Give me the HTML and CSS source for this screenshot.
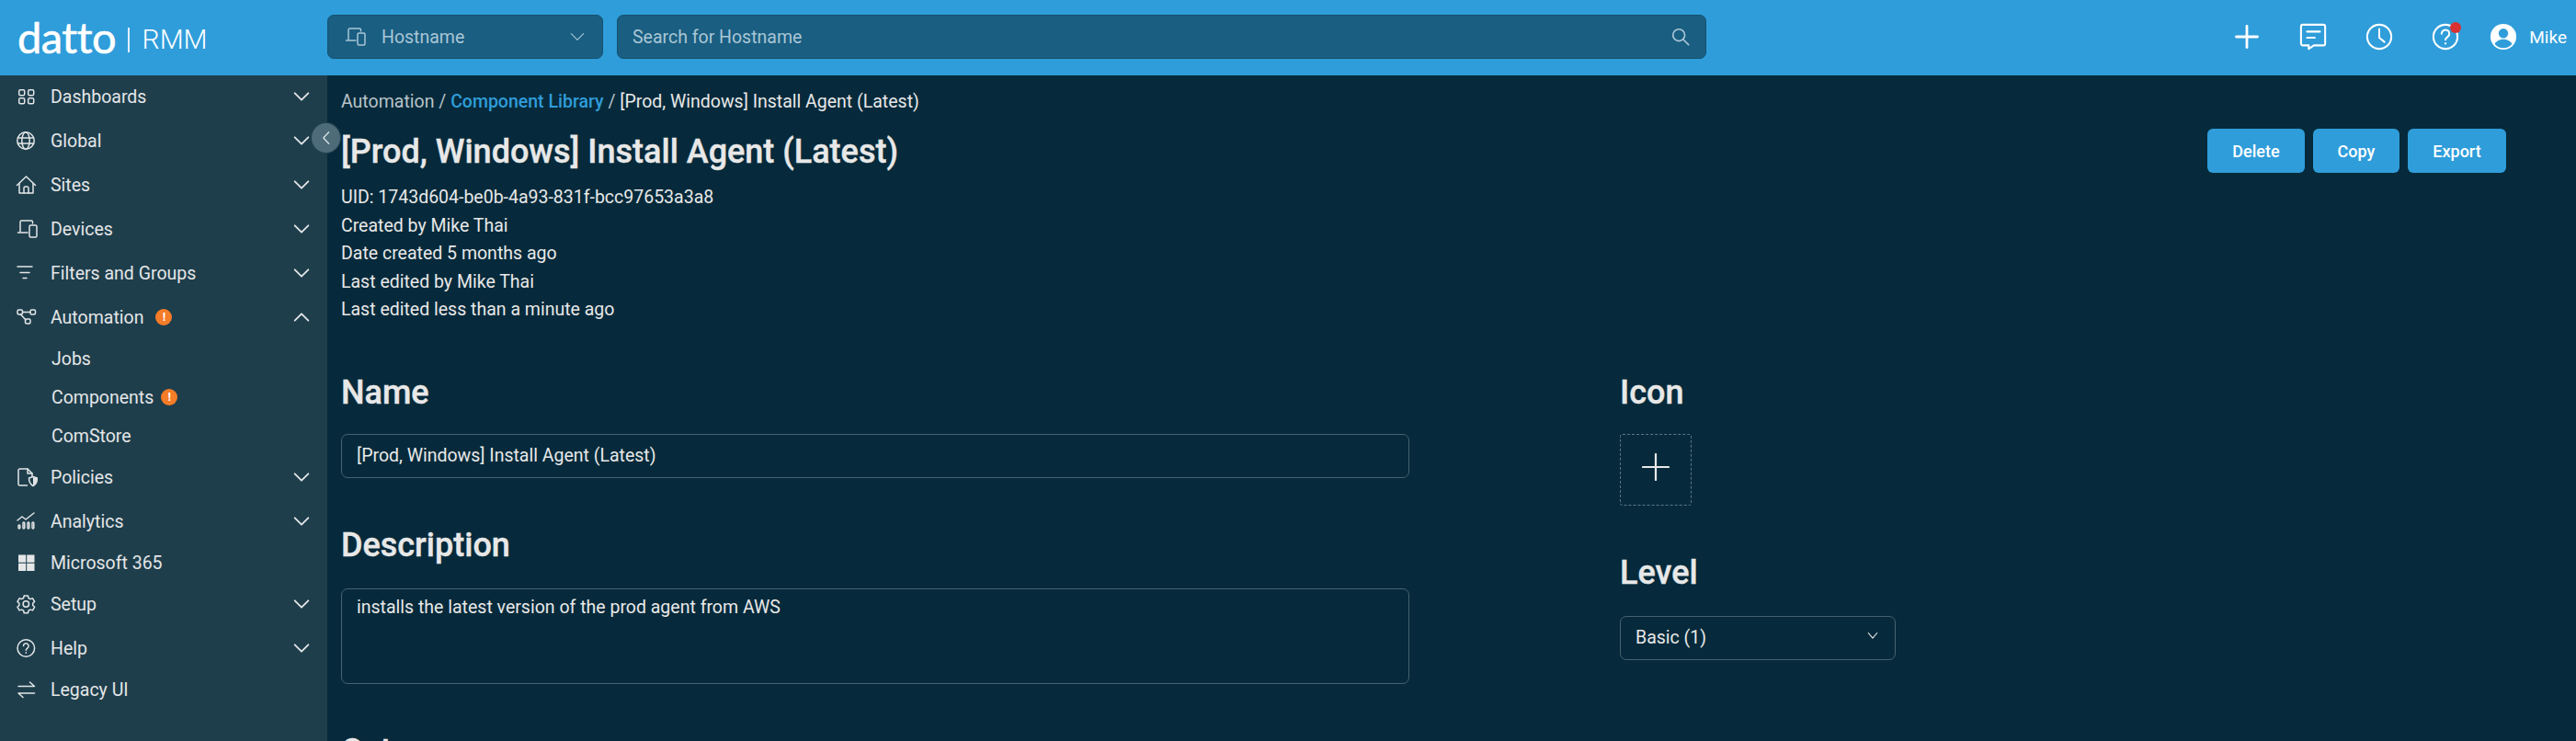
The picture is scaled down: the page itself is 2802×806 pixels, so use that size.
FILE: index.html
```html
<!DOCTYPE html>
<html lang="en">
<head>
<meta charset="utf-8">
<title>Datto RMM</title>
<link rel="stylesheet" href="styles.css">
</head>
<body>
<svg class="sprite" xmlns="http://www.w3.org/2000/svg">
  <symbol id="i-dash" viewBox="0 0 24 24"><rect x="3.7" y="4.7" width="6" height="6" rx="1.5"/><rect x="13.7" y="4.7" width="6" height="6" rx="1.5"/><rect x="3.7" y="13.7" width="6" height="6" rx="1.5"/><rect x="13.7" y="13.7" width="6" height="6" rx="1.5"/></symbol>
  <symbol id="i-globe" viewBox="0 0 24 24"><circle cx="11" cy="12" r="9.2"/><ellipse cx="11" cy="12" rx="4.2" ry="9.2"/><path d="M2.4 9h17.2M2.4 15h17.2"/></symbol>
  <symbol id="i-home" viewBox="0 0 24 24"><path d="M1.5 12.5 11.500 3l10 9.500"/><path d="M4 10.500V21h15V10.500"/><path d="M9 21v-5.500a1.500 1.500 0 0 1 1.500-1.500h2a1.500 1.500 0 0 1 1.500 1.500V21"/></symbol>
  <symbol id="i-devices" viewBox="0 0 24 24"><path d="M5 15V4.500A1.500 1.500 0 0 1 6.500 3H17a1.500 1.500 0 0 1 1.500 1.500V6"/><path d="M2.500 16H13"/><rect x="15" y="8" width="8" height="13" rx="1.500"/></symbol>
  <symbol id="i-filter" viewBox="0 0 24 24"><path d="M2 5h16M5 11.500h10M8 17.500h4"/></symbol>
  <symbol id="i-auto" viewBox="0 0 24 24"><rect x="2" y="4" width="5.500" height="5" rx="1.500"/><rect x="16" y="4" width="5.500" height="5" rx="1.500"/><rect x="10.500" y="14" width="5.500" height="5" rx="1.500"/><path d="M7.500 6.500H16M5.500 9l5.500 6"/></symbol>
  <symbol id="i-policy" viewBox="0 0 24 24"><path d="M12.500 21H4.500A1.500 1.500 0 0 1 3 19.500V4.500A1.500 1.500 0 0 1 4.500 3H13l5 5v3"/><path d="M13 3v5h5"/><path d="M19 11.500l4.500 1.500c0 4-1 6.500-4.500 8.500-3.500-2-4.500-4.500-4.500-8.500z"/><path class="fill" d="M19 12l4 1.300c0 3.700-1 6-4 7.700z"/></symbol>
  <symbol id="i-chart" viewBox="0 0 24 24"><path d="M2 11l5-4 4 3 9-7"/><rect x="3" y="16" width="1.800" height="4" rx=".9"/><rect x="8" y="13" width="1.800" height="7" rx=".9"/><rect x="13" y="13" width="1.800" height="7" rx=".9"/><rect x="18" y="13" width="1.800" height="7" rx=".9"/></symbol>
  <symbol id="i-win" viewBox="0 0 24 24"><path class="fill solid" d="M3 3.500h8.200v8.200H3zM12.200 3.500h8.300v8.200h-8.300zM3 12.700h8.200V21H3zM12.200 12.700h8.300V21h-8.300z"/></symbol>
  <symbol id="i-gear" viewBox="0 0 24 24"><circle cx="11.300" cy="12" r="3.200"/><path d="M9.200 3h4.200l.6 2.500 2 1.100 2.500-.8 2.100 3.600-1.900 1.800v2.300l1.900 1.800-2.100 3.600-2.500-.8-2 1.100-.6 2.500H9.200l-.6-2.500-2-1.100-2.500.8L2 15.300l1.900-1.800v-2.300L2 9.400l2.100-3.600 2.500.8 2-1.100z"/></symbol>
  <symbol id="i-help" viewBox="0 0 24 24"><circle cx="11.300" cy="12" r="9.300"/><path d="M8.500 9.500a2.800 2.800 0 1 1 4.500 2.300c-1 .7-1.700 1.200-1.700 2.400"/><path d="M11.300 16.800v.5"/></symbol>
  <symbol id="i-swap" viewBox="0 0 24 24"><path d="M3 8.500h17.500L15.500 4"/><path d="M20.500 16H3l5 4.500"/></symbol>
  <symbol id="i-down" viewBox="0 0 24 24"><path d="M4 8l8 8 8-8"/></symbol>
  <symbol id="i-up" viewBox="0 0 24 24"><path d="M4 16l8-8 8 8"/></symbol>
</svg>

<header class="topbar">
  <div class="logo"><span class="logo-word">datto</span><span class="logo-sep"></span><span class="logo-rmm">RMM</span></div>
  <div class="scope">
    <svg class="ico scope-ico"><use href="#i-devices"/></svg>
    <span class="scope-label">Hostname</span>
    <svg class="ico scope-chev"><use href="#i-down"/></svg>
  </div>
  <div class="search">
    <span class="search-text">Search for Hostname</span>
    <svg class="search-ico" viewBox="0 0 24 24"><circle cx="10" cy="10" r="7"/><path d="M15 15l7 7"/></svg>
  </div>
  <div class="actions">
    <svg class="act act-plus" viewBox="0 0 30 30"><path d="M15 3.500v23M3.500 15h23"/></svg>
    <svg class="act" viewBox="0 0 32 32"><path d="M4 2h24a2 2 0 0 1 2 2v20a2 2 0 0 1-2 2H17l-6 4v-4H4a2 2 0 0 1-2-2V4a2 2 0 0 1 2-2z"/><path d="M9 10h15M9 17h9"/></svg>
    <svg class="act" viewBox="0 0 32 32"><circle cx="16" cy="16" r="14"/><path d="M16 7v10l6 5"/></svg>
    <div class="help-wrap">
      <svg class="act" viewBox="0 0 32 32"><circle cx="16" cy="16" r="14"/><path d="M11.500 12.500a4.500 4.500 0 1 1 7 3.700c-1.500 1-2.500 1.800-2.500 3.300"/><path d="M16 23.500v.5"/></svg>
      <span class="dot"></span>
    </div>
    <div class="user">
      <svg class="avatar" viewBox="0 0 32 32"><circle class="av-bg" cx="16" cy="16" r="15"/><circle class="av-fg" cx="16" cy="12" r="5.500"/><path class="av-fg" d="M6 24.500c2-4 6-5.500 10-5.500s8 1.500 10 5.500c-2.500 3-6 4.500-10 4.500s-7.500-1.500-10-4.500z"/></svg>
      <span>Mike</span>
    </div>
  </div>
</header>

<div class="shell">
  <nav class="sidebar">
    <a class="row"><svg class="ico nav-ico"><use href="#i-dash"/></svg><span class="label">Dashboards</span><svg class="ico chev"><use href="#i-down"/></svg></a>
    <a class="row"><svg class="ico nav-ico"><use href="#i-globe"/></svg><span class="label">Global</span><svg class="ico chev"><use href="#i-down"/></svg></a>
    <a class="row"><svg class="ico nav-ico"><use href="#i-home"/></svg><span class="label">Sites</span><svg class="ico chev"><use href="#i-down"/></svg></a>
    <a class="row"><svg class="ico nav-ico"><use href="#i-devices"/></svg><span class="label">Devices</span><svg class="ico chev"><use href="#i-down"/></svg></a>
    <a class="row"><svg class="ico nav-ico"><use href="#i-filter"/></svg><span class="label">Filters and Groups</span><svg class="ico chev"><use href="#i-down"/></svg></a>
    <a class="row"><svg class="ico nav-ico"><use href="#i-auto"/></svg><span class="label">Automation</span><span class="badge badge-wide">!</span><svg class="ico chev"><use href="#i-up"/></svg></a>
    <a class="row row-short row-sub"><span class="label">Jobs</span></a>
    <a class="row row-short row-sub"><span class="label">Components</span><span class="badge">!</span></a>
    <a class="row row-short row-sub"><span class="label">ComStore</span></a>
    <a class="row"><svg class="ico nav-ico"><use href="#i-policy"/></svg><span class="label">Policies</span><svg class="ico chev"><use href="#i-down"/></svg></a>
    <a class="row"><svg class="ico nav-ico"><use href="#i-chart"/></svg><span class="label">Analytics</span><svg class="ico chev"><use href="#i-down"/></svg></a>
    <a class="row row-short"><svg class="ico nav-ico"><use href="#i-win"/></svg><span class="label">Microsoft 365</span></a>
    <a class="row"><svg class="ico nav-ico"><use href="#i-gear"/></svg><span class="label">Setup</span><svg class="ico chev"><use href="#i-down"/></svg></a>
    <a class="row"><svg class="ico nav-ico"><use href="#i-help"/></svg><span class="label">Help</span><svg class="ico chev"><use href="#i-down"/></svg></a>
    <a class="row row-short"><svg class="ico nav-ico"><use href="#i-swap"/></svg><span class="label">Legacy UI</span></a>
  </nav>
  <button class="collapse" type="button" aria-label="Collapse"><svg viewBox="0 0 12 20"><path d="M9.500 3 3 10l6.500 7"/></svg></button>

  <main class="content">
    <div class="crumbs"><span class="crumb-muted">Automation / </span><a class="crumb-link">Component Library</a><span class="crumb-muted"> / </span><span class="crumb-cur">[Prod, Windows] Install Agent (Latest)</span></div>
    <div class="head">
      <h1>[Prod, Windows] Install Agent (Latest)</h1>
      <div class="btns">
        <button class="btn btn-delete" type="button">Delete</button>
        <button class="btn btn-copy" type="button">Copy</button>
        <button class="btn btn-export" type="button">Export</button>
      </div>
    </div>
    <div class="meta">
      <div>UID: 1743d604-be0b-4a93-831f-bcc97653a3a8</div>
      <div>Created by Mike Thai</div>
      <div>Date created 5 months ago</div>
      <div>Last edited by Mike Thai</div>
      <div>Last edited less than a minute ago</div>
    </div>
    <div class="form">
      <div class="col">
        <h2>Name</h2>
        <div class="field field-input">[Prod, Windows] Install Agent (Latest)</div>
        <h2 class="later">Description</h2>
        <div class="field field-area">installs the latest version of the prod agent from AWS</div>
        <h2 class="later">Category</h2>
      </div>
      <div class="col">
        <h2>Icon</h2>
        <div class="icon-pick"><svg viewBox="0 0 30 30"><path d="M15 1v28M1 15h28"/></svg></div>
        <h2 class="later">Level</h2>
        <div class="field field-select"><span>Basic (1)</span><svg viewBox="0 0 14 10"><path d="M1.500 1.500 7 8l5.500-6.500"/></svg></div>
      </div>
    </div>
  </main>
</div>
</body>
</html>
```

FILE: styles.css
```css
* { box-sizing: border-box; }
html, body { margin: 0; height: 100%; }
body {
  overflow: hidden;
  background: #062a3b;
  color: #e8e8e8;
  font-family: Roboto, "Liberation Sans", sans-serif;
  font-size: 19.500px;
  display: flex;
  flex-direction: column;
}
.sprite { display: none; }

/* top bar */
.topbar {
  flex: none;
  height: 82px;
  background: #2f9dda;
  display: flex;
  align-items: center;
  padding-bottom: 2px;
}
.logo {
  width: 356px;
  padding-left: 19px;
  display: flex;
  align-items: center;
  color: #fff;
}
.logo-word { font-family: Lato, sans-serif; font-size: 47px; line-height: 50px; letter-spacing: -.5px; -webkit-text-stroke: .6px #fff; }
.logo-sep { width: 1.500px; height: 27px; margin: 6px 14px 0 13px; background: #fff; opacity: .85; }
.logo-rmm { font-family: Roboto, sans-serif; font-weight: 300; font-size: 30px; margin-top: 5px; }

.scope, .search {
  height: 48px;
  background: #1a5e81;
  border: 1px solid #155270;
  border-radius: 7px;
  color: #a9c6d6;
  display: flex;
  align-items: center;
}
.scope { width: 300px; padding: 0 17px; stroke: #a9c6d6; }
.scope-ico { width: 24px; height: 24px; stroke-width: 1.500; margin-right: 17px; }
.scope-label { flex: 1; }
.scope-chev { width: 20px; height: 20px; stroke-width: 1.300; }
.search { width: 1185px; margin-left: 15px; padding: 0 16px 0 16px; justify-content: space-between; }
.search-ico { width: 22px; height: 22px; fill: none; stroke: #a9c6d6; stroke-width: 1.800; }

.actions {
  flex: 1;
  display: flex;
  align-items: center;
  justify-content: flex-end;
  gap: 42px;
  padding-right: 10px;
  color: #fff;
}
.act { width: 30px; height: 30px; fill: none; stroke: #fff; stroke-width: 2.200; stroke-linecap: round; stroke-linejoin: round; display: block; }
.act-plus { stroke-width: 2.800; }
.help-wrap { position: relative; }
.dot { position: absolute; top: -1px; right: -2px; width: 12px; height: 12px; border-radius: 50%; background: #d93030; }
.user { display: flex; align-items: center; gap: 13px; margin-left: -9px; font-size: 19px; }
.avatar { width: 30px; height: 30px; display: block; }
.av-bg { fill: #fff; }
.av-fg { fill: #2f9dda; }

/* shell */
.shell { flex: 1; min-height: 0; display: flex; position: relative; }

/* sidebar */
.sidebar { flex: none; width: 356px; background: #1e3e4c; }
.ico, .row svg {
  fill: none;
  stroke-linecap: round;
  stroke-linejoin: round;
}
.row {
  height: 48px;
  display: flex;
  align-items: center;
  padding: 0 17px;
  color: #e4e6e7;
  stroke: #e4e6e7;
}
.row:first-child { margin-top: -1px; }
.row-short { height: 42px; }
.row-sub { padding-left: 56px; }
.nav-ico { width: 24px; height: 24px; margin-right: 14px; stroke-width: 1.500; flex: none; }
.fill { fill: #e4e6e7; stroke: none; }
.solid { fill: #e4e6e7; }
.chev { width: 22px; height: 22px; stroke-width: 2; margin-left: auto; }
.badge {
  width: 18px;
  height: 18px;
  margin-left: 8px;
  border-radius: 50%;
  background: #f57c28;
  color: #fff;
  font-size: 13px;
  font-weight: 700;
  line-height: 18px;
  text-align: center;
}
.badge-wide { margin-left: 13px; }

.collapse {
  position: absolute;
  left: 338px;
  top: 51px;
  width: 33px;
  height: 34px;
  padding: 0;
  border: 1px solid #23404d;
  border-radius: 50%;
  background: #4d6b78;
  display: flex;
  align-items: center;
  justify-content: center;
}
.collapse svg { width: 11px; height: 18px; fill: none; stroke: #d8dfe2; stroke-width: 1.500; stroke-linecap: round; stroke-linejoin: round; }

/* content */
.content { flex: 1; min-width: 0; padding: 17px 76px 0 15px; }
.crumbs { line-height: 24px; }
.crumb-muted { color: #b9c3c9; }
.crumb-link { color: #2f9dda; font-weight: 500; }
.crumb-cur { color: #e8e8e8; }
.head { display: flex; justify-content: space-between; align-items: flex-start; margin-top: 17px; }
h1, h2 { margin: 0; font-weight: 500; color: #e8e8e8; -webkit-text-stroke: .4px #e8e8e8; }
h1 { font-size: 36px; line-height: 44px; margin-top: 3px; }
h2 { font-size: 36px; line-height: 44px; }
.later { margin-top: 51px; }
.btns { display: flex; gap: 9px; }
.btn {
  height: 48px;
  border: 0;
  border-radius: 6px;
  background: #2f9dda;
  color: #fff;
  font: 500 18px Roboto, sans-serif;
  padding: 0;
}
.btn-delete { width: 106px; }
.btn-copy { width: 94px; }
.btn-export { width: 107px; }
.meta { margin-top: 12px; line-height: 30.500px; }
.form { display: grid; grid-template-columns: 1162px 300px; column-gap: 229px; margin-top: 52px; }
.col { min-width: 0; }
.field { border: 1px solid #46626f; border-radius: 7px; margin-top: 23px; padding: 0 16px; }
.field-input { height: 48px; line-height: 46px; }
.field-area { height: 104px; line-height: 26px; padding-top: 7px; margin-top: 25px; }
.icon-pick {
  width: 78px;
  height: 78px;
  margin-top: 23px;
  border: 1px dashed #5b7684;
  border-radius: 3px;
  display: flex;
  align-items: center;
  justify-content: center;
}
.icon-pick svg { width: 30px; height: 30px; fill: none; stroke: #e8e8e8; stroke-width: 2.200; stroke-linecap: round; margin-top: -5px; }
.field-select { height: 48px; display: flex; align-items: center; justify-content: space-between; margin-top: 25px; padding-right: 18px; }
.field-select svg { width: 12px; height: 9px; fill: none; stroke: #e8e8e8; stroke-width: 1.300; stroke-linecap: round; stroke-linejoin: round; margin-top: -4px; }
```
